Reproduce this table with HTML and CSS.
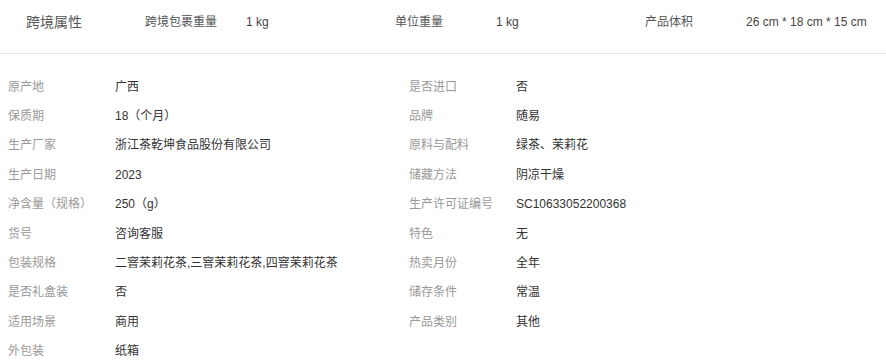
FILE: index.html
```html
<!DOCTYPE html>
<html lang="zh-CN">
<head>
<meta charset="utf-8">
<title>商品属性</title>
<link rel="stylesheet" href="styles.css">
</head>
<body>
<div class="cross">
  <div class="cross-title">跨境属性</div>
  <div class="cross-item"><span class="cross-label">跨境包裹重量</span><span class="cross-value">1 kg</span></div>
  <div class="cross-item"><span class="cross-label">单位重量</span><span class="cross-value">1 kg</span></div>
  <div class="cross-item"><span class="cross-label">产品体积</span><span class="cross-value">26 cm * 18 cm * 15 cm</span></div>
</div>
<div class="attrs">
  <div class="attr"><span class="attr-label">原产地</span><span class="attr-value">广西</span></div>
  <div class="attr"><span class="attr-label">是否进口</span><span class="attr-value">否</span></div>
  <div class="attr"><span class="attr-label">保质期</span><span class="attr-value">18（个月）</span></div>
  <div class="attr"><span class="attr-label">品牌</span><span class="attr-value">随易</span></div>
  <div class="attr"><span class="attr-label">生产厂家</span><span class="attr-value">浙江茶乾坤食品股份有限公司</span></div>
  <div class="attr"><span class="attr-label">原料与配料</span><span class="attr-value">绿茶、茉莉花</span></div>
  <div class="attr"><span class="attr-label">生产日期</span><span class="attr-value">2023</span></div>
  <div class="attr"><span class="attr-label">储藏方法</span><span class="attr-value">阴凉干燥</span></div>
  <div class="attr"><span class="attr-label">净含量（规格）</span><span class="attr-value">250（g）</span></div>
  <div class="attr"><span class="attr-label">生产许可证编号</span><span class="attr-value">SC10633052200368</span></div>
  <div class="attr"><span class="attr-label">货号</span><span class="attr-value">咨询客服</span></div>
  <div class="attr"><span class="attr-label">特色</span><span class="attr-value">无</span></div>
  <div class="attr"><span class="attr-label">包装规格</span><span class="attr-value">二窨茉莉花茶,三窨茉莉花茶,四窨茉莉花茶</span></div>
  <div class="attr"><span class="attr-label">热卖月份</span><span class="attr-value">全年</span></div>
  <div class="attr"><span class="attr-label">是否礼盒装</span><span class="attr-value">否</span></div>
  <div class="attr"><span class="attr-label">储存条件</span><span class="attr-value">常温</span></div>
  <div class="attr"><span class="attr-label">适用场景</span><span class="attr-value">商用</span></div>
  <div class="attr"><span class="attr-label">产品类别</span><span class="attr-value">其他</span></div>
  <div class="attr"><span class="attr-label">外包装</span><span class="attr-value">纸箱</span></div>
</div>
</body>
</html>
```

FILE: styles.css
```css
html, body {
  margin: 0;
  padding: 0;
  background: #fff;
}
body {
  font-family: "Liberation Sans", "Noto Sans CJK SC", sans-serif;
  font-size: 12px;
  color: #333;
}
.cross {
  display: flex;
  align-items: center;
  height: 44px;
  padding: 0 0 9px 26px;
  border-bottom: 1px solid #e5e5e5;
  overflow: hidden;
}
.cross-title {
  flex: none;
  width: 119px;
  font-size: 14px;
  color: #555;
  line-height: 20px;
}
.cross-item {
  flex: none;
  width: 250px;
  display: flex;
  line-height: 18px;
}
.cross-item:last-child {
  width: auto;
}
.cross-label {
  width: 101px;
  color: #555;
  flex: none;
}
.cross-value {
  color: #444;
  white-space: nowrap;
}
.attrs {
  display: grid;
  grid-template-columns: 401px 1fr;
  grid-auto-rows: 29.4px;
  padding: 18px 0 0 8px;
}
.attr {
  display: flex;
  align-items: center;
  line-height: 18px;
}
.attr-label {
  width: 107px;
  flex: none;
  color: #999;
}
.attr-value {
  color: #333;
  white-space: nowrap;
}
```
